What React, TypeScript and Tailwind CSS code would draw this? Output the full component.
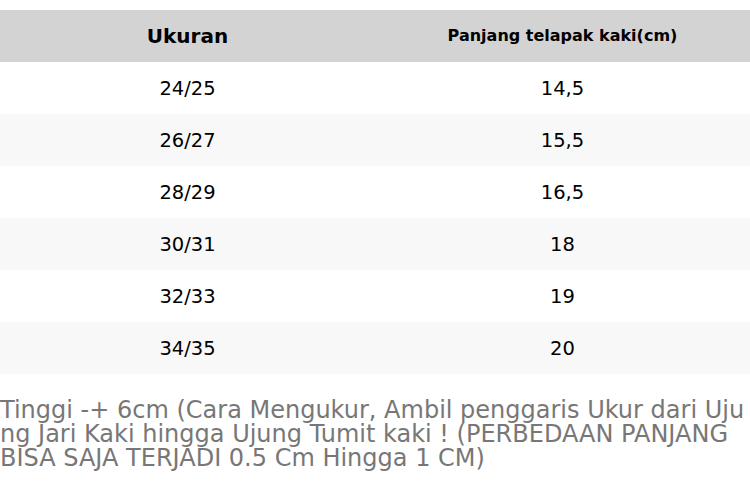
import React from "react";

const rows: [string, string][] = [
  ["24/25", "14,5"],
  ["26/27", "15,5"],
  ["28/29", "16,5"],
  ["30/31", "18"],
  ["32/33", "19"],
  ["34/35", "20"],
];

export default function App() {
  return (
    <div
      className="w-[750px] h-[494px] overflow-hidden bg-white text-black"
      style={{ fontFamily: '"DejaVu Sans", Verdana, sans-serif' }}
    >
      <div className="pt-[10px]">
        <div className="grid grid-cols-2 h-[52px] bg-[#d3d3d3] items-center">
          <div className="text-center font-bold text-[20px]">Ukuran</div>
          <div className="text-center font-bold text-[16px]">Panjang telapak kaki(cm)</div>
        </div>
        {rows.map(([a, b], i) => (
          <div
            key={a}
            className={
              "grid grid-cols-2 h-[52px] items-center pt-[2px] text-[19.5px] " +
              (i % 2 === 1 ? "bg-[#f8f8f8]" : "bg-white")
            }
          >
            <div className="text-center">{a}</div>
            <div className="text-center">{b}</div>
          </div>
        ))}
      </div>
      <div className="mt-[24px] text-[24px] leading-[24px] text-[#777777] whitespace-nowrap">
        <div>Tinggi -+ 6cm (Cara Mengukur, Ambil penggaris Ukur dari Uju</div>
        <div>ng Jari Kaki hingga Ujung Tumit kaki ! (PERBEDAAN PANJANG</div>
        <div>BISA SAJA TERJADI 0.5 Cm Hingga 1 CM)</div>
      </div>
    </div>
  );
}
